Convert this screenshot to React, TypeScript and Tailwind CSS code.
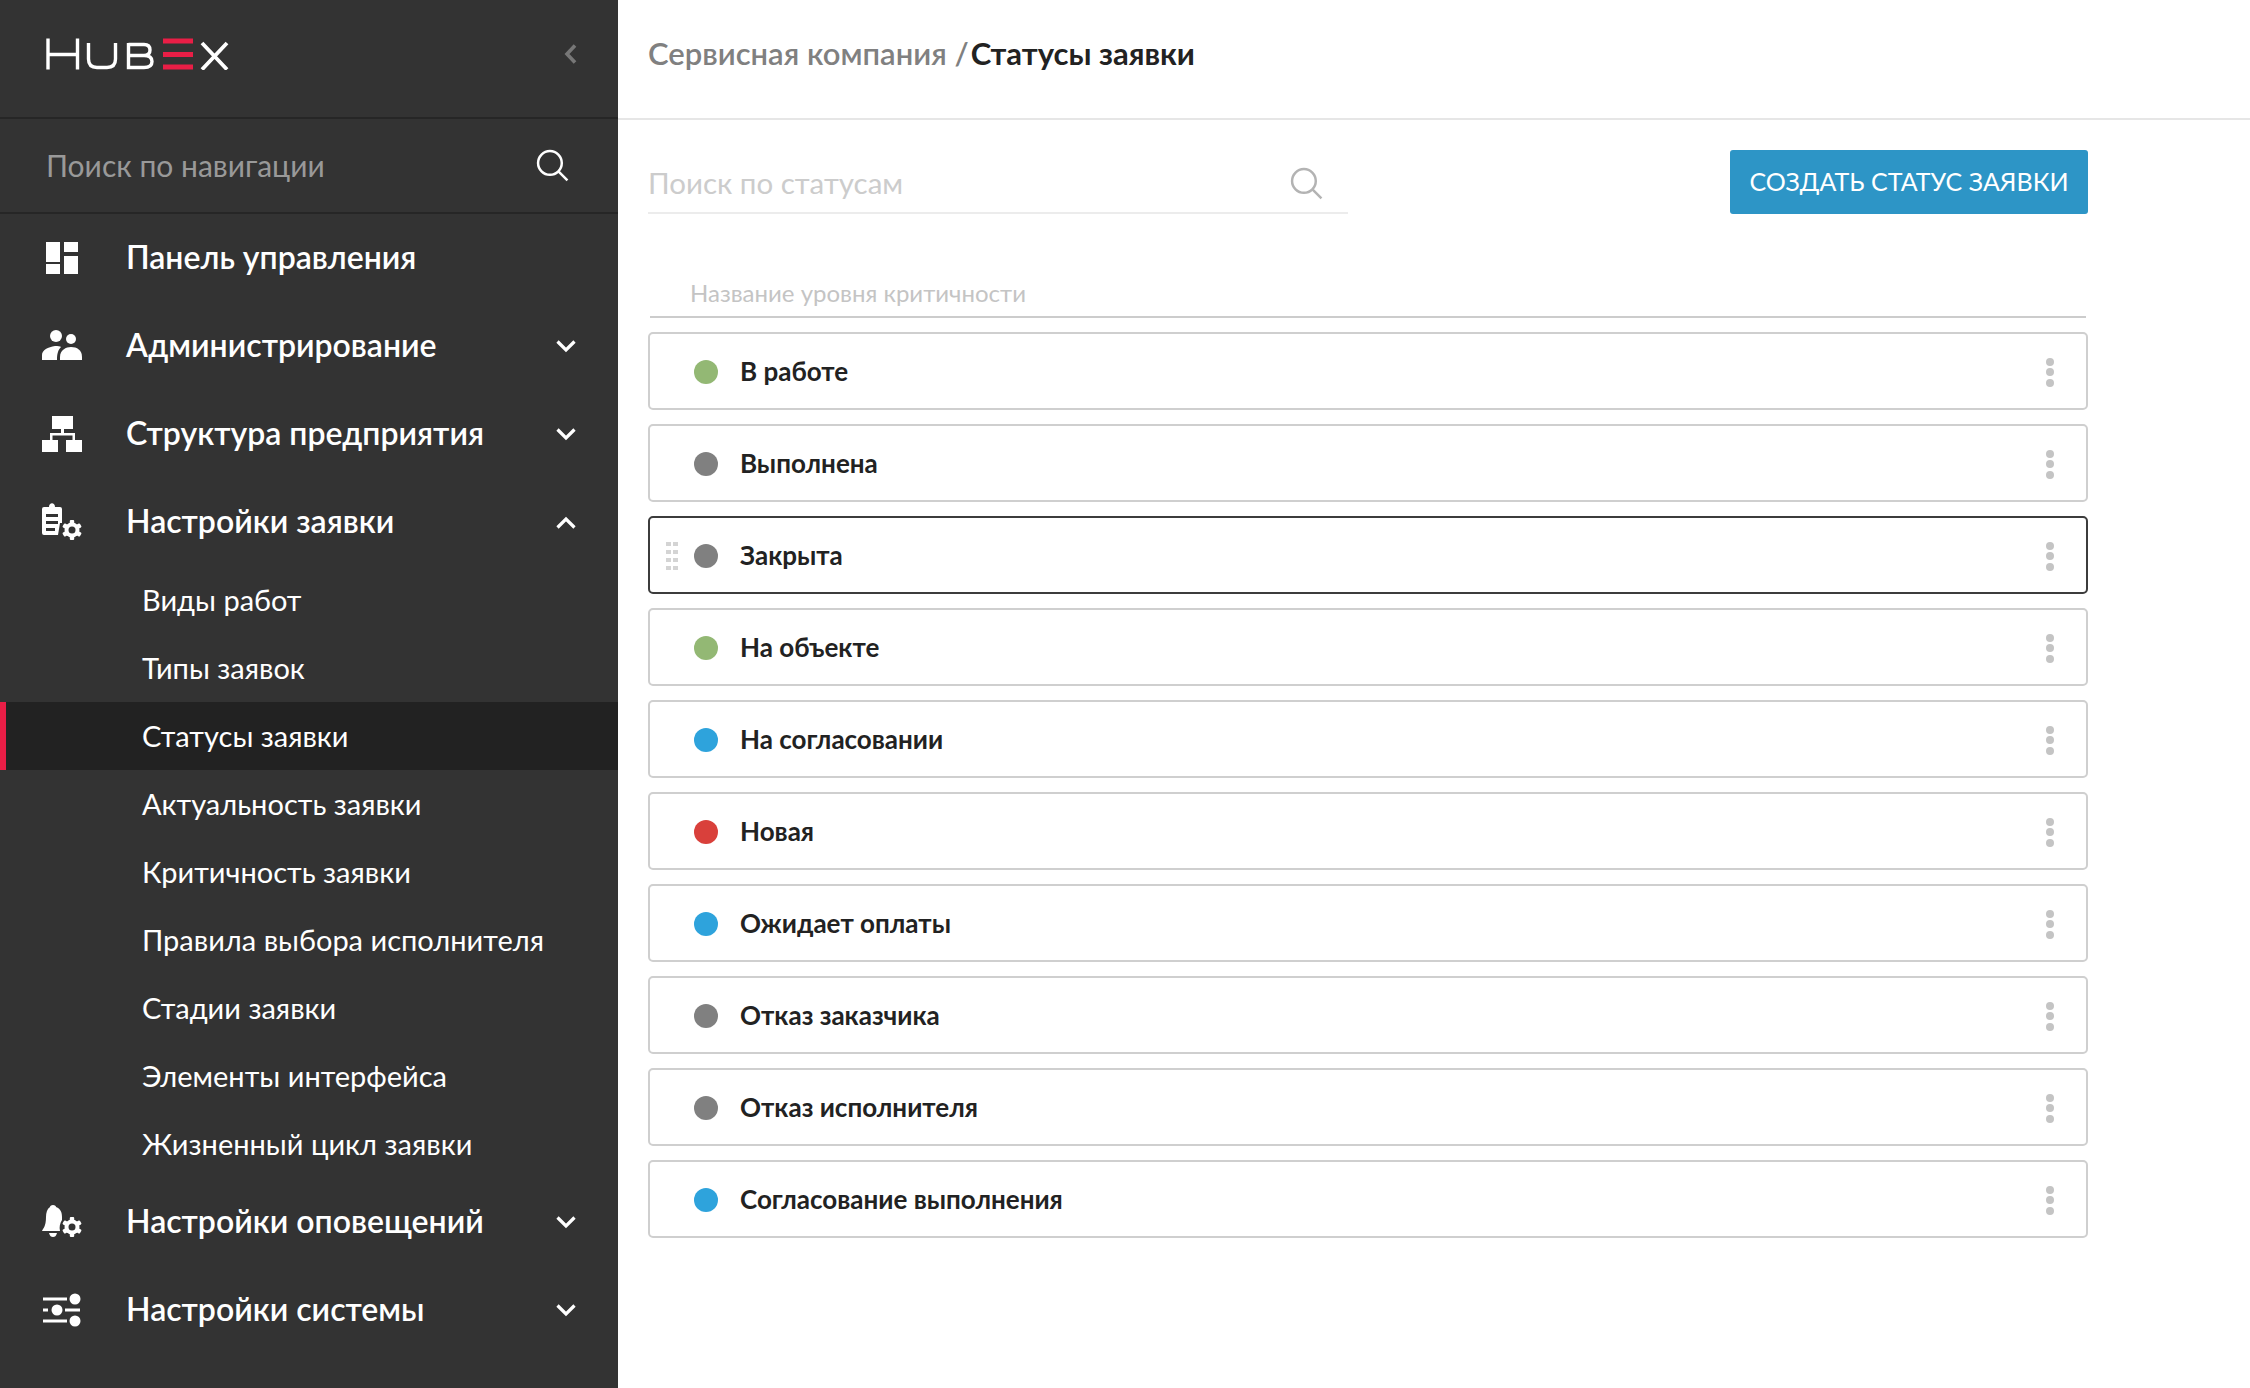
import React from 'react';

const statuses = [
  { name: 'В работе', color: 'bg-[#93b874]' },
  { name: 'Выполнена', color: 'bg-[#808080]' },
  { name: 'Закрыта', color: 'bg-[#808080]', active: true },
  { name: 'На объекте', color: 'bg-[#93b874]' },
  { name: 'На согласовании', color: 'bg-[#2ea3dc]' },
  { name: 'Новая', color: 'bg-[#d9403b]' },
  { name: 'Ожидает оплаты', color: 'bg-[#2ea3dc]' },
  { name: 'Отказ заказчика', color: 'bg-[#808080]' },
  { name: 'Отказ исполнителя', color: 'bg-[#808080]' },
  { name: 'Согласование выполнения', color: 'bg-[#2ea3dc]' },
];

const subItems = [
  'Виды работ',
  'Типы заявок',
  'Статусы заявки',
  'Актуальность заявки',
  'Критичность заявки',
  'Правила выбора исполнителя',
  'Стадии заявки',
  'Элементы интерфейса',
  'Жизненный цикл заявки',
];

const Gear = ({ cx, cy }: { cx: number; cy: number }) => (
  <g transform={`translate(${cx} ${cy})`}>
    {[0, 60, 120].map((a) => (
      <rect key={a} x="-2.200" y="-10" width="4.400" height="20" rx="1" transform={`rotate(${a})`} fill="#fff" />
    ))}
    <circle r="7.500" fill="#fff" />
    <circle r="3.500" fill="#333" />
  </g>
);

const DashboardIcon = () => (
  <svg width="40" height="36" viewBox="0 0 40 36" fill="#fff">
    <rect x="4" y="2" width="14" height="20" />
    <rect x="22" y="2" width="14" height="10" />
    <rect x="4" y="24" width="14" height="10" />
    <rect x="22" y="16" width="14" height="18" />
  </svg>
);

const UsersIcon = () => (
  <svg width="40" height="36" viewBox="0 0 40 36" fill="#fff">
    <circle cx="14" cy="8" r="6" />
    <circle cx="29" cy="11" r="5" />
    <path d="M0 32 V27 C0 22 6 19 13 18 C16 18 18 18 19 19 C16 22 15 26 15 32 Z" />
    <path d="M18 32 V29 C18 22 24 19 29 19 C35 19 40 22 40 29 V32 Z" />
  </svg>
);

const StructureIcon = () => (
  <svg width="40" height="36" viewBox="0 0 40 36" fill="#fff">
    <rect x="10" y="0" width="21" height="13" />
    <rect x="19" y="13" width="3" height="5" />
    <rect x="8" y="17" width="25" height="2.500" />
    <rect x="8" y="17" width="2.500" height="8" />
    <rect x="30.500" y="17" width="2.500" height="8" />
    <rect x="0" y="24" width="16" height="12" />
    <rect x="24" y="24" width="16" height="12" />
  </svg>
);

const TicketGearIcon = () => (
  <svg width="40" height="38" viewBox="0 0 40 38">
    <path
      fillRule="evenodd"
      fill="#fff"
      d="M2 4 H7 C7 -1 13 -1 13 4 H18 Q20 4 20 6 V20 H18 L16 32 H2 Q0 32 0 30 V6 Q0 4 2 4 Z M4 11 V14 H16 V11 Z M4 18 V21 H16 V18 Z M4 25 V28 H13 V25 Z"
    />
    <Gear cx={30} cy={27} />
  </svg>
);

const BellGearIcon = () => (
  <svg width="40" height="36" viewBox="0 0 40 36">
    <path
      fill="#fff"
      d="M11 1 C13 1 14 2 14 3 C19 5 20 9 20 13 V16 C18 19 17 23 18 27 H0 C1 24 4 23 4 13 C4 9 5 5 8 3 C8 2 9 1 11 1 Z M7 29 H15 C14 32 13 33 11 33 C9 33 8 32 7 29 Z"
    />
    <Gear cx={30} cy={23} />
  </svg>
);

const SlidersIcon = () => (
  <svg width="40" height="36" viewBox="0 0 40 36" fill="#fff">
    <rect x="1" y="5.500" width="24" height="3" />
    <circle cx="33" cy="7" r="5.500" />
    <rect x="1" y="16.500" width="5" height="3" />
    <circle cx="15" cy="18" r="5.500" />
    <rect x="23" y="16.500" width="15" height="3" />
    <rect x="1" y="27.500" width="24" height="3" />
    <circle cx="33" cy="29" r="5.500" />
  </svg>
);

const Chevron = ({ up }: { up?: boolean }) => (
  <svg width="20" height="13" viewBox="0 0 20 13" fill="none" stroke="#fff" strokeWidth="3.200">
    <path d={up ? 'M1.500 11.500 L10 3 L18.500 11.500' : 'M1.500 1.500 L10 10 L18.500 1.500'} />
  </svg>
);

const MainItem = ({ icon, label, chevron }: { icon: React.ReactNode; label: string; chevron?: 'up' | 'down' }) => (
  <div className="h-[88px] flex items-center pl-[42px] pr-[42px]">
    <div className="w-[40px] flex justify-center shrink-0">{icon}</div>
    <span className="ml-[44px] text-[32px] leading-[36px] pb-[2px] font-semibold text-white flex-1">{label}</span>
    {chevron && <Chevron up={chevron === 'up'} />}
  </div>
);

const SearchIcon = ({ color, size }: { color: string; size: number }) => (
  <svg width={size} height={size} viewBox="0 0 32 32" fill="none" stroke={color} strokeWidth="2.400">
    <circle cx="13.500" cy="13.500" r="11.500" />
    <path d="M22 22 L30.500 30.500" />
  </svg>
);

const Logo = () => (
  <svg width="184" height="32" viewBox="0 0 184 32" fill="none" stroke="#fff" strokeWidth="3.400">
    <path d="M2 0.500 V31.500 M31.500 0.500 V31.500 M2 16.500 H31.500" />
    <path d="M42.500 5 V21 Q42.500 29.500 51 29.500 H61 Q69.500 29.500 69.500 21 V5" />
    <path d="M82.500 6.500 H98 Q104 6.500 104 12 Q104 17.500 98 17.500 H82.500 M98 17.500 Q106 17.500 106 23.500 Q106 29.500 98 29.500 H82.500 V5" />
    <path d="M117 3 H147 M117 16.500 H147 M117 29 H147" stroke="#e91e46" strokeWidth="5" />
    <path d="M156 5 L181 31.500 M181 5 L156 31.500" strokeWidth="3.800" />
  </svg>
);

const Sidebar = () => (
  <aside className="w-[618px] shrink-0 bg-[#333333] flex flex-col">
    <div className="h-[119px] flex items-center justify-between pl-[46px] pr-[41px] border-b-2 border-[#262626] pb-[10px]">
      <Logo />
      <svg width="13" height="20" viewBox="0 0 13 20" fill="none" stroke="#777" strokeWidth="3.600">
        <path d="M11 1.500 L3 10 L11 18.500" />
      </svg>
    </div>
    <div className="h-[95px] flex items-center justify-between pl-[46px] pr-[49px] border-b-2 border-[#262626]">
      <span className="text-[30px] leading-[36px] pb-[1px] text-[#999999]">Поиск по навигации</span>
      <SearchIcon color="#fff" size={33} />
    </div>
    <nav className="flex flex-col">
      <MainItem icon={<DashboardIcon />} label="Панель управления" />
      <MainItem icon={<UsersIcon />} label="Администрирование" chevron="down" />
      <MainItem icon={<StructureIcon />} label="Структура предприятия" chevron="down" />
      <MainItem icon={<TicketGearIcon />} label="Настройки заявки" chevron="up" />
      <div className="flex flex-col">
        {subItems.map((item) => (
          <div
            key={item}
            className={
              item === 'Статусы заявки'
                ? 'h-[68px] flex items-center pl-[136px] text-[29px] text-white bg-[#222222] border-l-[6px] border-[#e91e46]'
                : 'h-[68px] flex items-center pl-[142px] text-[29px] text-white'
            }
          >
            {item}
          </div>
        ))}
      </div>
      <MainItem icon={<BellGearIcon />} label="Настройки оповещений" chevron="down" />
      <MainItem icon={<SlidersIcon />} label="Настройки системы" chevron="down" />
    </nav>
  </aside>
);

const StatusRow = ({ name, color, active }: { name: string; color: string; active?: boolean }) => (
  <div
    className={
      active
        ? 'h-[78px] border-2 border-[#3c3c3c] rounded-[5px] flex items-center relative pt-[2px] pl-[44px] pr-[32px]'
        : 'h-[78px] border-2 border-[#cfcfcf] rounded-[5px] flex items-center pt-[2px] pl-[44px] pr-[32px]'
    }
  >
    {active && (
      <div className="absolute left-[16px] top-[24px] grid grid-cols-2 gap-x-[2px] gap-y-[4px]">
        {[0, 1, 2, 3, 4, 5, 6, 7].map((i) => (
          <span key={i} className="w-[5px] h-[4px] bg-[#d4d4d4]" />
        ))}
      </div>
    )}
    <span className={`w-[24px] h-[24px] rounded-full shrink-0 ${color}`} />
    <span className="ml-[22px] flex-1 pb-[2px] text-[26px] font-bold text-[#222222]">{name}</span>
    <div className="flex flex-col gap-[2.500px]">
      <span className="w-[8px] h-[8px] rounded-full bg-[#c4c4c4]" />
      <span className="w-[8px] h-[8px] rounded-full bg-[#c4c4c4]" />
      <span className="w-[8px] h-[8px] rounded-full bg-[#c4c4c4]" />
    </div>
  </div>
);

export default function App() {
  return (
    <div className="w-[2250px] h-[1388px] flex overflow-hidden bg-white font-['Lato','Noto_Sans',sans-serif]">
      <Sidebar />
      <main className="flex-1 flex flex-col">
        <div className="h-[120px] shrink-0 flex items-center pl-[30px] pb-[11px] border-b-2 border-[#e6e6e6] text-[31px] font-semibold text-[#808080]">
          <span>Сервисная компания /</span>
          <span className="ml-[2px] font-bold text-[#222222]">Статусы заявки</span>
        </div>
        <div className="w-[1440px] ml-[30px] flex flex-col">
          <div className="flex items-start justify-between mt-[30px]">
            <div className="w-[700px] h-[64px] pt-[5px] border-b-2 border-[#ececec] flex items-center justify-between pr-[25px]">
              <span className="text-[29.500px] text-[#cccccc]">Поиск по статусам</span>
              <SearchIcon color="#b3b3b3" size={33} />
            </div>
            <button className="w-[358px] h-[64px] bg-[#2d95c6] rounded-[3px] text-white text-[25px]">
              СОЗДАТЬ СТАТУС ЗАЯВКИ
            </button>
          </div>
          <div className="mt-[52px] h-[52px] mx-[2px] border-b-2 border-[#cccccc] pl-[40px] text-[24px] leading-[54px] text-[#c4c4c4]">
            Название уровня критичности
          </div>
          <div className="mt-[14px] flex flex-col gap-[14px]">
            {statuses.map((s) => (
              <StatusRow key={s.name} name={s.name} color={s.color} active={s.active} />
            ))}
          </div>
        </div>
      </main>
    </div>
  );
}
